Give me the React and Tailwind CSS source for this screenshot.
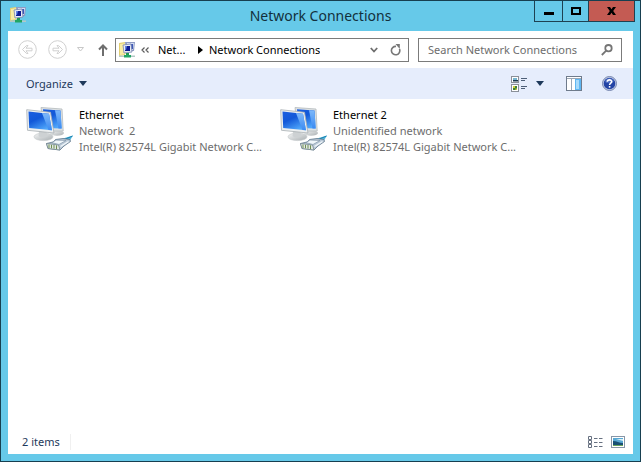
import React, { useState } from 'react';

const connections = [
  { name: 'Ethernet', network: 'Network  2', device: 'Intel(R) 82574L Gigabit Network C...' },
  { name: 'Ethernet 2', network: 'Unidentified network', device: 'Intel(R) 82574L Gigabit Network C...' },
];

const FolderNetworkIcon = () => (
  <svg width="16" height="16" viewBox="0 0 16 16" className="shrink-0" aria-hidden="true">
    <path d="M0 1 L6 0 V13 L0 14 Z" fill="#e3cf72" />
    <path d="M1 2 L7 1 V12 L1 13 Z" fill="#f8eca4" />
    <path d="M6 0 H16 L15 9 H7 Z" fill="#8f9cc4" />
    <path d="M8 1 H15 L14 8 H8 Z" fill="#d3dcf2" />
    <path d="M11 2 H14 V7 H11 Z" fill="#3c57b8" />
    <path d="M4 3 L12 2 L13 10 L5 11 Z" fill="#e9edf8" stroke="#7581ac" strokeWidth="0.8" />
    <path d="M6 4 H11 V9 H6 Z" fill="#0f1c94" />
    <path d="M6 4 H8 L7 8 H6 Z" fill="#6285e6" />
    <rect x="0" y="13.5" width="16" height="1.5" fill="#b4c9c6" />
    <rect x="7" y="11" width="3" height="2" fill="#239a55" />
    <rect x="5" y="13" width="7" height="2.5" fill="#21a565" />
  </svg>
);

const NavCircle = ({ flip }) => (
  <svg width="19" height="19" viewBox="0 0 19 19" fill="none" stroke="#d0d0d0" className={flip ? 'rotate-180' : ''} aria-hidden="true">
    <circle cx="9.5" cy="9.5" r="8.8" />
    <path d="M4.5 9.5 L8.5 5.5 H10 L8 8.2 H14 V10.8 H8 L10 13.5 H8.5 Z" strokeLinejoin="round" />
  </svg>
);

const EthernetIcon = ({ id }) => (
  <svg width="50" height="48" viewBox="0 0 50 48" className="shrink-0" aria-hidden="true">
    <defs>
      <linearGradient id={`screen-${id}`} x1="0" y1="0" x2="0.6" y2="1">
        <stop offset="0" stopColor="#1c5fe0" />
        <stop offset="0.45" stopColor="#1258d8" />
        <stop offset="1" stopColor="#4fa6fa" />
      </linearGradient>
      <linearGradient id={`glare-${id}`} x1="0" y1="0" x2="0" y2="1">
        <stop offset="0" stopColor="#7db8fa" />
        <stop offset="1" stopColor="#3b8af2" />
      </linearGradient>
      <linearGradient id={`stand-${id}`} x1="0" y1="0" x2="1" y2="1">
        <stop offset="0" stopColor="#f6f7f7" />
        <stop offset="1" stopColor="#a9afb2" />
      </linearGradient>
    </defs>
    <ellipse cx="33" cy="29" rx="7" ry="2.8" fill={`url(#stand-${id})`} />
    <path d="M17 3.500 L38 5 L39.200 27 L20 27 Z" fill="#dde1e3" stroke="#b4babd" strokeWidth="0.8" />
    <path d="M19 5.200 L36.500 6.600 L37.700 24.500 L21 24 Z" fill={`url(#screen-${id})`} />
    <path d="M31 6.200 L36.500 6.600 L37.700 24.500 L34.500 24.400 Z" fill={`url(#glare-${id})`} />
    <ellipse cx="19.5" cy="32.8" rx="9.5" ry="3.8" fill={`url(#stand-${id})`} stroke="#c3c7c9" strokeWidth="0.6" />
    <path d="M15 27 H22 L24 32 C21 34 17 34 14.500 32 Z" fill="#cdd1d3" />
    <path d="M2.700 5.700 L26.500 8.300 L30 29 L3.500 26.300 Z" fill="#eceff0" stroke="#aab0b4" strokeWidth="0.8" />
    <path d="M4.500 7.400 L25 9.800 L28 26.300 L5.200 24 Z" fill={`url(#screen-${id})`} />
    <path d="M18 9 L25 9.800 L28 26.300 L24.500 25.900 Z" fill={`url(#glare-${id})`} />
    <path d="M36 37 C39 33.500 43 33.500 49 31.500 L46 36.500 L40 38 Z" fill="#54b9de" />
    <path d="M38 36.500 L48.500 32" stroke="#187fae" />
    <path d="M22.500 39.500 L29 38 L31.500 35.500 L39 34.500 L46 35.500 L46.500 37.500 L40 42 L36 46 L24 44.500 Z" fill="#b9c8d6" stroke="#60778c" strokeWidth="0.8" />
    <path d="M22.500 39.500 L34.500 41 L36 46 L24 44.500 Z" fill="#e2e9e4" stroke="#6b7f88" strokeWidth="0.7" />
    <path d="M25 40.500 V44 M27.500 40.800 V44.300 M30 41 V44.600 M32.500 41.300 V45" stroke="#6f8f52" />
    <path d="M28 38.700 L32 36 L42 36.500 L35 40.500 Z" fill="#eff6fa" stroke="#8195a8" strokeWidth="0.7" />
    <path d="M36.500 42.500 L44.500 37.500" stroke="#f1f7fa" strokeWidth="1.4" />
  </svg>
);

const ViewIcon = () => (
  <svg width="17" height="16" viewBox="0 0 17 16" aria-hidden="true">
    <rect x="0.5" y="0.5" width="7" height="6" fill="#fff" stroke="#8b9099" />
    <rect x="2" y="2" width="4" height="2" fill="#75b4cf" />
    <rect x="2" y="4" width="5" height="1.5" fill="#1b3850" />
    <rect x="0.5" y="8.5" width="7" height="7" fill="#fff" stroke="#8b9099" />
    <rect x="2" y="10" width="4" height="4" fill="#3f8037" />
    <path d="M2 10 H4 V12 H2 Z M4.500 12.500 H6 V14 H4.500 Z" fill="#cfcf3d" />
    <path d="M10 2.500 H16 M10 4.500 H14 M10 10.500 H16 M10 12.500 H14" stroke="#4d5e77" />
  </svg>
);

const PaneIcon = () => (
  <svg width="16" height="15" viewBox="0 0 16 15" aria-hidden="true">
    <rect x="0.5" y="0.5" width="15" height="14" fill="#fff" stroke="#6f7b8c" />
    <path d="M1 2.500 H15 M5.500 3 V14" stroke="#9ba6b4" />
    <rect x="9" y="3" width="6" height="11" fill="#5eb6f2" />
    <rect x="10" y="4" width="3" height="9" fill="#a6dafb" />
  </svg>
);

const HelpIcon = () => (
  <svg width="15" height="15" viewBox="0 0 15 15" aria-hidden="true">
    <circle cx="7.5" cy="7.5" r="7" fill="#c3cee8" stroke="#7585ae" />
    <circle cx="7.5" cy="7.5" r="5.8" fill="#2344a5" />
    <path d="M3 5 A5 5 0 0 1 12 5 L10 7 H4 Z" fill="#6685d3" opacity="0.6" />
    <path d="M5.300 5.800 C5.300 3.200 9.700 3.200 9.700 5.700 C9.700 7.300 7.600 7 7.600 9" fill="none" stroke="#fff" strokeWidth="1.6" />
    <rect x="6.8" y="10" width="1.6" height="1.6" fill="#fff" />
  </svg>
);

const Caret = () => (
  <svg width="8" height="5" viewBox="0 0 8 5" aria-hidden="true">
    <path d="M0 0 H8 L4 5 Z" fill="#1e395b" />
  </svg>
);

const TitleBar = () => (
  <header className="grid h-[30px] shrink-0 grid-cols-[1fr_auto_1fr] items-start">
    <div className="pt-[6px] pl-[9px]">
      <FolderNetworkIcon />
    </div>
    <h1 className="pt-1 text-[14px] leading-[22px] text-[#12303c]">Network Connections</h1>
    <div className="mr-[5px] flex h-[21px] justify-self-end border-x border-b border-[#1e4152]">
      <button type="button" aria-label="Minimize" className="flex w-[27px] items-center justify-center">
        <svg width="10" height="10" viewBox="0 0 10 10"><rect y="6" width="10" height="3" /></svg>
      </button>
      <button type="button" aria-label="Maximize" className="flex w-[27px] items-center justify-center border-x border-[#1e4152]">
        <svg width="10" height="8" viewBox="0 0 10 8"><rect x="1" y="1" width="8" height="6" fill="none" stroke="#000" strokeWidth="2" /></svg>
      </button>
      <button type="button" aria-label="Close" className="flex w-[45px] items-center justify-center bg-[#c45b53]">
        <svg width="9" height="8" viewBox="0 0 9 8"><path d="M0 0 H3 L4.500 2.300 L6 0 H9 L6.200 4 L9 8 H6 L4.500 5.700 L3 8 H0 L2.800 4 Z" /></svg>
      </button>
    </div>
  </header>
);

const AddressRow = ({ query, onQueryChange }) => (
  <nav className="flex h-[37px] shrink-0 items-center pr-[11px] pl-[10px]">
    <button type="button" aria-label="Back"><NavCircle /></button>
    <button type="button" aria-label="Forward" className="ml-[11px]"><NavCircle flip /></button>
    <button type="button" aria-label="Recent locations" className="ml-[10px]">
      <svg width="7" height="5" viewBox="0 0 7 5"><path d="M0.500 0.500 H6.500 L3.500 4 Z" fill="none" stroke="#c8c8c8" /></svg>
    </button>
    <button type="button" aria-label="Up" className="ml-[14px]">
      <svg width="10" height="12" viewBox="0 0 10 12" fill="none" stroke="#6e6e6e" strokeWidth="2"><path d="M5 12 V2 M1 5.500 L5 1.500 L9 5.500" /></svg>
    </button>
    <div className="ml-[7px] flex h-6 min-w-0 flex-1 items-center border border-[#7b7b7b] pl-[3px]">
      <FolderNetworkIcon />
      <svg width="8" height="6" viewBox="0 0 8 6" fill="none" stroke="#5c5c5c" strokeWidth="1.2" className="ml-[6px] shrink-0" aria-hidden="true"><path d="M3.500 0.500 L1 3 L3.500 5.500 M7.500 0.500 L5 3 L7.500 5.500" /></svg>
      <button type="button" className="ml-[9px] w-[29px] shrink-0 text-left">Net...</button>
      <svg width="5" height="8" viewBox="0 0 5 8" className="ml-[11px] shrink-0" aria-hidden="true"><path d="M0 0 L5 4 L0 8 Z" /></svg>
      <button type="button" className="ml-[6px] truncate">Network Connections</button>
      <button type="button" aria-label="Previous locations" className="ml-auto shrink-0">
        <svg width="8" height="6" viewBox="0 0 8 6" fill="none" stroke="#6e6e6e" strokeWidth="1.8"><path d="M0.800 1 L4 4.500 L7.200 1" /></svg>
      </button>
      <button type="button" aria-label="Refresh" className="mr-[7px] ml-[12px] shrink-0">
        <svg width="11" height="12" viewBox="0 0 11 12" fill="none" stroke="#777" strokeWidth="1.6"><path d="M9.500 5 A4.200 4.200 0 1 1 6 2.400" /><path d="M5.500 0 H9.800 V5 Z" fill="#777" stroke="none" /></svg>
      </button>
    </div>
    <div className="ml-[9px] flex h-[24px] w-[204px] items-center border border-[#7b7b7b] pr-[8px] pl-[9px]">
      <input
        type="text"
        aria-label="Search Network Connections"
        value={query}
        onChange={(e) => onQueryChange(e.target.value)}
        placeholder="Search Network Connections"
        className="h-[20px] min-w-0 flex-1 outline-none placeholder:text-[#6d6d6d]"
      />
      <svg width="12" height="12" viewBox="0 0 12 12" fill="none" stroke="#757575" strokeWidth="1.8" aria-hidden="true"><circle cx="7.5" cy="4.2" r="3.2" /><path d="M5 6.800 L0.800 11" /></svg>
    </div>
  </nav>
);

const Toolbar = () => (
  <div className="flex h-[31px] shrink-0 items-center bg-[#e6edfc] pr-[16px] pl-[18px] text-[#1e395b]">
    <button type="button" className="flex items-center gap-[6px]">
      Organize
      <Caret />
    </button>
    <button type="button" aria-label="Change your view" className="ml-auto"><ViewIcon /></button>
    <button type="button" aria-label="More view options" className="ml-[8px]"><Caret /></button>
    <button type="button" aria-label="Preview pane" className="ml-[22px]"><PaneIcon /></button>
    <button type="button" aria-label="Help" className="ml-[20px]"><HelpIcon /></button>
  </div>
);

const App = () => {
  const [query, setQuery] = useState('');

  return (
    <div className="flex min-h-screen flex-col border border-[#173f50] bg-[#66c9e9] font-['Noto_Sans','Open_Sans',sans-serif] text-[11px] leading-4 text-black">
      <TitleBar />
      <main className="mx-[7px] mb-[7px] flex flex-1 flex-col bg-white">
        <AddressRow query={query} onQueryChange={setQuery} />
        <Toolbar />
        <ul className="flex flex-1 flex-wrap content-start px-[16px] pt-[5px]">
          {connections.map((item, index) => (
            <li key={item.name} className="flex w-[254px]">
              <EthernetIcon id={index} />
              <div className="pt-[3px] pl-[5px] whitespace-pre">
                <p>{item.name}</p>
                <p className="text-[#6d6d6d]">{item.network}</p>
                <p className="text-[#6d6d6d]">{item.device}</p>
              </div>
            </li>
          ))}
        </ul>
        <footer className="flex h-[24px] shrink-0 items-center pr-[8px] pl-[14px] text-[#1e395b]">
          <span className="border-r border-[#f0f0f0] pr-[10px]">2 items</span>
          <button type="button" aria-label="Details view" className="ml-auto">
            <svg width="15" height="13" viewBox="0 0 15 13" fill="none" stroke="#667080"><path d="M0.500 0.500 H3.500 V3.500 H0.500 Z M0.500 4.500 H3.500 V7.500 H0.500 Z M0.500 8.500 H3.500 V11.500 H0.500 Z M6 2.500 H9.500 M11 2.500 H14.500 M6 6.500 H9.500 M11 6.500 H14.500 M6 10.500 H9.500 M11 10.500 H14.500" /></svg>
          </button>
          <button type="button" aria-label="Large icons view" className="ml-[8px]">
            <svg width="14" height="12" viewBox="0 0 14 12"><rect x="0.5" y="0.5" width="13" height="11" fill="#fff" stroke="#8796a7" /><rect x="2" y="2" width="10" height="8" fill="#59a9d4" /><path d="M2 5 C6 5 8 7 12 7 V10 H2 Z" fill="#185074" /><path d="M5 3 L12 5 V3 Z" fill="#d5f0fa" /><path d="M2 9 H12 V10 H2 Z" fill="#68a35a" /></svg>
          </button>
        </footer>
      </main>
    </div>
  );
};

export default App;
